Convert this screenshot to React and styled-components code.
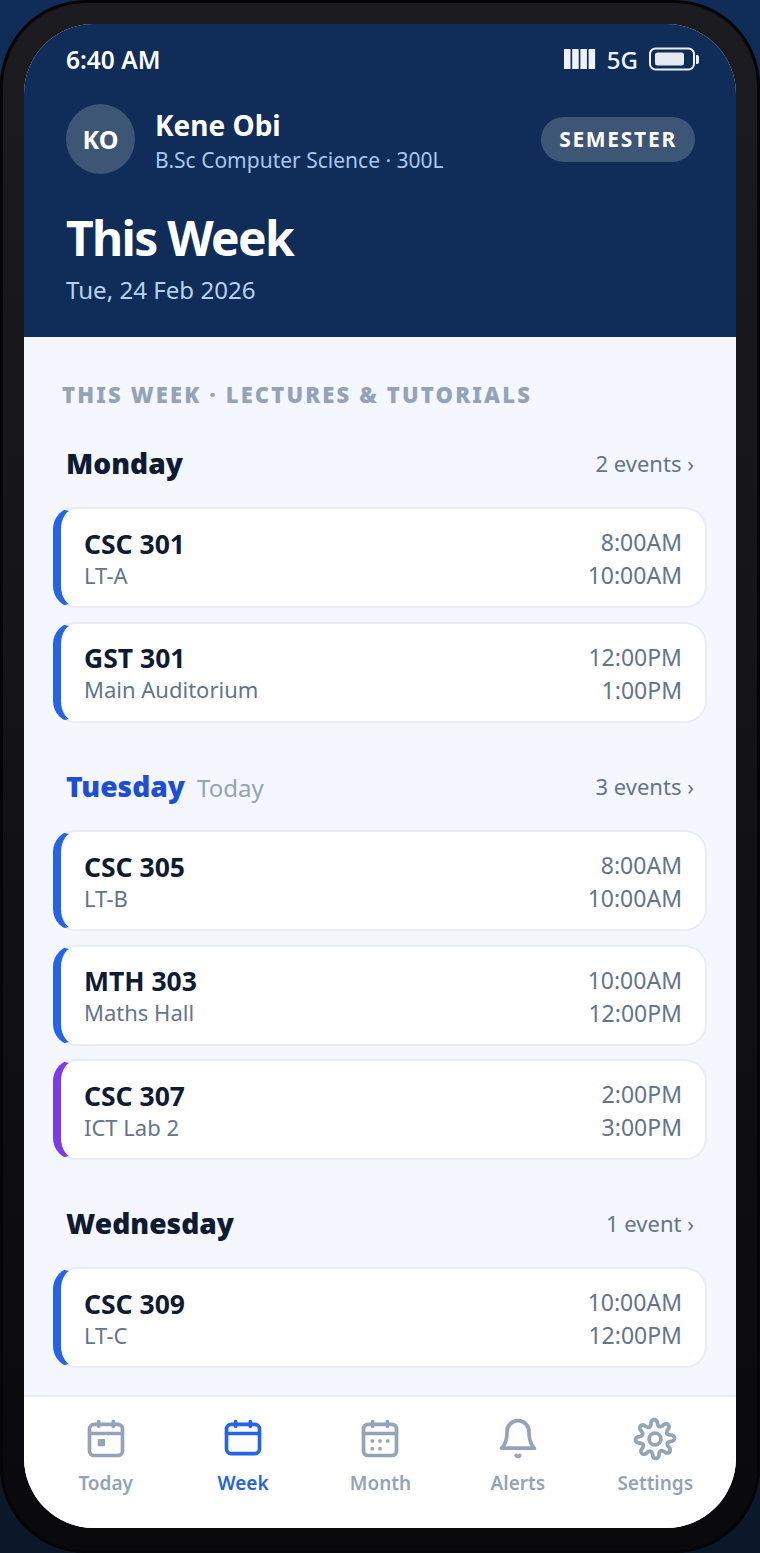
import React from 'react';
import styled, { createGlobalStyle } from 'styled-components';

const GlobalStyle = createGlobalStyle`
  html, body { margin: 0; padding: 0; }
  body {
    font-family: "Noto Sans", "Open Sans", sans-serif;
  }
`;

const Backdrop = styled.div`
  width: 760px;
  height: 1553px;
  overflow: hidden;
  background: linear-gradient(180deg, #0f2d58 0%, #0e2747 50%, #0a1828 100%);
`;

const Phone = styled.div`
  box-sizing: border-box;
  width: 760px;
  height: 1553px;
  padding: 24px 24px 25px;
  border-radius: 86px;
  background: linear-gradient(180deg, #1b1b20 0%, #131317 50%, #09090c 100%);
  box-shadow: inset 0 0 0 3px #050507;
`;

const Screen = styled.div`
  height: 1504px;
  border-radius: 70px;
  overflow: hidden;
  display: flex;
  flex-direction: column;
  background: #f4f7fd;
`;

const Header = styled.header`
  box-sizing: border-box;
  height: 313px;
  padding: 19px 41px 0 42px;
  background: #0f2d58;
  color: #fff;
`;

const StatusBar = styled.div`
  display: flex;
  justify-content: space-between;
  align-items: center;
  height: 32px;
  margin-right: -4px;
  font-size: 24.5px;
  font-weight: 600;
`;

const StatusRight = styled.div`
  display: flex;
  align-items: center;
  gap: 11px;
  font-size: 24px;
  font-weight: 500;
  color: #eef2f8;
`;

const ProfileRow = styled.div`
  display: flex;
  align-items: center;
  justify-content: space-between;
  margin-top: 29px;
`;

const Profile = styled.div`
  display: flex;
  align-items: center;
  gap: 21px;
`;

const Avatar = styled.div`
  width: 69px;
  height: 70px;
  border-radius: 50%;
  display: flex;
  align-items: center;
  justify-content: center;
  background: #3e5676;
  font-size: 25px;
  font-weight: 700;
`;

const Name = styled.div`
  margin-left: -1px;
  font-size: 28px;
  font-weight: 700;
  line-height: 38px;
`;

const Degree = styled.div`
  margin: 2px 0 -2px -1px;
  font-size: 21px;
  line-height: 28px;
  color: #a9c6ee;
`;

const Pill = styled.div`
  width: 154px;
  height: 45px;
  border-radius: 23px;
  display: flex;
  align-items: center;
  justify-content: center;
  background: #3e5676;
  font-size: 21px;
  font-weight: 700;
  letter-spacing: 1.7px;
`;

const Title = styled.h1`
  margin: 34px 0 0;
  font-size: 48px;
  line-height: 60px;
  font-weight: 700;
  letter-spacing: -1.7px;
`;

const DateText = styled.div`
  margin-top: 6px;
  font-size: 24.1px;
  line-height: 32px;
  color: #b8d0f0;
`;

const Content = styled.main`
  flex: 1;
  min-height: 0;
  padding: 43px 29px 0 29px;
`;

const SectionLabel = styled.div`
  margin-left: 9px;
  font-size: 22px;
  line-height: 28px;
  font-weight: 900;
  letter-spacing: 2.15px;
  color: #94a3b8;
  white-space: nowrap;
`;

const DayRow = styled.div`
  display: flex;
  align-items: center;
  height: 40px;
  padding: 0 13px 0 13px;
  margin: ${(p) => p.$top}px 0 24px;
`;

const DayName = styled.span`
  font-size: 28.2px;
  font-weight: 900;
  color: ${(p) => (p.$today ? '#1d4ed8' : '#0f1b33')};
`;

const TodayTag = styled.span`
  margin: 2px 0 0 12px;
  font-size: 24px;
  color: #94a3b8;
`;

const Count = styled.span`
  margin-left: auto;
  font-size: 22px;
  color: #64748b;
`;

const CardList = styled.div`
  display: flex;
  flex-direction: column;
  gap: 13.5px;
`;

const Card = styled.div`
  box-sizing: border-box;
  height: 101px;
  display: flex;
  justify-content: space-between;
  align-items: center;
  padding: 3px 23px 0 23px;
  background: #fff;
  border: 2px solid #e8ecf3;
  border-left: 8px solid ${(p) => p.$accent};
  border-radius: 22px;
`;

const Code = styled.div`
  font-size: 26.5px;
  line-height: 33px;
  font-weight: 700;
  color: #0f1b33;
`;

const Room = styled.div`
  margin-top: -2px;
  font-size: 22px;
  line-height: 32px;
  color: #64748b;
`;

const Times = styled.div`
  text-align: right;
  font-size: 23px;
  line-height: 33px;
  color: #64748b;
`;

const Nav = styled.nav`
  box-sizing: border-box;
  height: 133px;
  flex-shrink: 0;
  display: grid;
  grid-template-columns: repeat(5, 137.4px);
  padding: 20px 13px 0;
  background: #fff;
  border-top: 2px solid #e8ecf3;
`;

const Tab = styled.div`
  display: flex;
  flex-direction: column;
  align-items: center;
  color: ${(p) => (p.$active ? '#2563eb' : '#94a3b8')};
`;

const TabIcon = styled.svg`
  width: 44px;
  height: 44px;
  overflow: visible;
  fill: none;
  stroke: currentColor;
  stroke-width: 2;
  stroke-linecap: round;
  stroke-linejoin: round;
`;

const TabLabel = styled.span`
  margin-top: 9px;
  font-size: 19px;
  line-height: 27px;
  font-weight: 600;
`;

// scalloped gear outline, 8 rounded lobes
const gearPath = () => {
  const points = [];
  for (let i = 0; i < 160; i++) {
    const a = (i / 160) * Math.PI * 2;
    const wave = Math.cos(8 * (a + 0.05));
    const shaped = Math.sign(wave) * Math.pow(Math.abs(wave), 0.6);
    const r = 8.9 + 1.75 * shaped;
    points.push(`${(12 + r * Math.cos(a)).toFixed(2)} ${(12 + r * Math.sin(a)).toFixed(2)}`);
  }
  return `M${points.join('L')}Z`;
};

const CalendarBase = ({ h = 17 }) => (
  <>
    <rect x="3" y="4" width="18" height={h} rx="2.5" />
    <path d="M3 9h18M8 2.5V5M16 2.5V5" />
  </>
);

const icons = {
  Today: (
    <>
      <CalendarBase />
      <rect x="7.5" y="12" width="4" height="4" rx=".6" fill="currentColor" stroke="none" />
    </>
  ),
  Week: <CalendarBase h={16} />,
  Month: (
    <>
      <CalendarBase />
      <g fill="currentColor" stroke="none">
        <rect x="6.9" y="12.2" width="1.8" height="1.8" />
        <rect x="11.1" y="12.2" width="1.8" height="1.8" />
        <rect x="15.3" y="12.2" width="1.8" height="1.8" />
        <rect x="6.9" y="16.4" width="1.8" height="1.8" />
        <rect x="11.1" y="16.4" width="1.8" height="1.8" />
      </g>
    </>
  ),
  Alerts: (
    <>
      <path d="M18 8A6 6 0 0 0 6 8c0 7-3 9-3 9h18s-3-2-3-9" />
      <path d="M13 21a1.2 1.2 0 0 1-2 0" />
    </>
  ),
  Settings: (
    <>
      <path d={gearPath()} />
      <circle cx="12" cy="12" r="3.2" />
    </>
  ),
};

const tabs = ['Today', 'Week', 'Month', 'Alerts', 'Settings'];

const days = [
  {
    name: 'Monday',
    count: '2 events ›',
    top: 35,
    items: [
      ['CSC 301', 'LT-A', '8:00AM', '10:00AM'],
      ['GST 301', 'Main Auditorium', '12:00PM', '1:00PM'],
    ],
  },
  {
    name: 'Tuesday',
    today: true,
    count: '3 events ›',
    top: 43.5,
    items: [
      ['CSC 305', 'LT-B', '8:00AM', '10:00AM'],
      ['MTH 303', 'Maths Hall', '10:00AM', '12:00PM'],
      ['CSC 307', 'ICT Lab 2', '2:00PM', '3:00PM', '#7c3aed'],
    ],
  },
  {
    name: 'Wednesday',
    count: '1 event ›',
    top: 43,
    items: [['CSC 309', 'LT-C', '10:00AM', '12:00PM']],
  },
];

const SignalIcon = () => (
  <svg width="32" height="22" viewBox="0 0 32 22" fill="#eef2f8">
    <rect x="0" y="1" width="6.5" height="20" />
    <rect x="8.2" y="1" width="6.5" height="20" />
    <rect x="16.4" y="1" width="6.5" height="20" />
    <rect x="24.6" y="1" width="6.5" height="20" />
  </svg>
);

const BatteryIcon = () => (
  <svg width="50" height="24" viewBox="0 0 50 24">
    <rect x="1" y="1.5" width="44" height="21" rx="5.5" fill="none" stroke="#eef2f8" strokeWidth="2" />
    <rect x="6" y="5.5" width="29" height="13" rx="2.5" fill="#e6e9f0" />
    <path d="M47 8h1a2 2 0 0 1 2 2v5a2 2 0 0 1-2 2h-1z" fill="#eef2f8" />
  </svg>
);

export default function App() {
  return (
    <Backdrop>
      <GlobalStyle />
      <Phone>
        <Screen>
          <Header>
            <StatusBar>
              <span>6:40 AM</span>
              <StatusRight>
                <SignalIcon />
                <span>5G</span>
                <BatteryIcon />
              </StatusRight>
            </StatusBar>
            <ProfileRow>
              <Profile>
                <Avatar>KO</Avatar>
                <div>
                  <Name>Kene Obi</Name>
                  <Degree>B.Sc Computer Science · 300L</Degree>
                </div>
              </Profile>
              <Pill>SEMESTER</Pill>
            </ProfileRow>
            <Title>This Week</Title>
            <DateText>Tue, 24 Feb 2026</DateText>
          </Header>
          <Content>
            <SectionLabel>THIS WEEK · LECTURES &amp; TUTORIALS</SectionLabel>
            {days.map((day) => (
              <section key={day.name}>
                <DayRow $top={day.top}>
                  <DayName $today={day.today}>{day.name}</DayName>
                  {day.today && <TodayTag>Today</TodayTag>}
                  <Count>{day.count}</Count>
                </DayRow>
                <CardList>
                  {day.items.map(([code, room, start, end, accent]) => (
                    <Card key={code} $accent={accent || '#2563eb'}>
                      <div>
                        <Code>{code}</Code>
                        <Room>{room}</Room>
                      </div>
                      <Times>
                        <div>{start}</div>
                        <div>{end}</div>
                      </Times>
                    </Card>
                  ))}
                </CardList>
              </section>
            ))}
          </Content>
          <Nav>
            {tabs.map((tab) => (
              <Tab key={tab} $active={tab === 'Week'}>
                <TabIcon viewBox="0 0 24 24">{icons[tab]}</TabIcon>
                <TabLabel>{tab}</TabLabel>
              </Tab>
            ))}
          </Nav>
        </Screen>
      </Phone>
    </Backdrop>
  );
}
